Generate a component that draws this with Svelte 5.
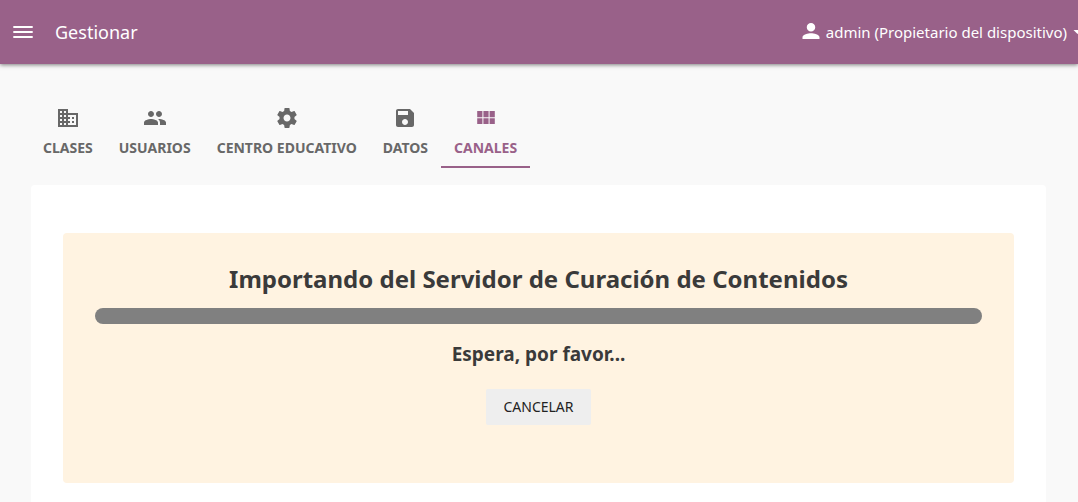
<script>
  const tabs = [
    { label: 'Clases', path: 'M12 7V3H2v18h20V7H12zM6 19H4v-2h2v2zm0-4H4v-2h2v2zm0-4H4V9h2v2zm0-4H4V5h2v2zm4 12H8v-2h2v2zm0-4H8v-2h2v2zm0-4H8V9h2v2zm0-4H8V5h2v2zm10 12h-8v-2h2v-2h-2v-2h2v-2h-2V9h8v10zm-2-8h-2v2h2v-2zm0 4h-2v2h2v-2z' },
    { label: 'Usuarios', path: 'M16 11c1.66 0 2.99-1.34 2.99-3S17.66 5 16 5s-3 1.34-3 3 1.34 3 3 3zm-8 0c1.66 0 2.99-1.34 2.99-3S9.66 5 8 5 5 6.34 5 8s1.34 3 3 3zm0 2c-2.33 0-7 1.17-7 3.5V19h14v-2.5C15 14.17 10.33 13 8 13zm8 0c-.29 0-.62.02-.97.05C16.19 13.89 17 15.02 17 16.5V19h6v-2.5c0-2.33-4.67-3.5-7-3.5z' },
    { label: 'Centro educativo', path: 'M19.43 12.98c.04-.32.07-.64.07-.98s-.03-.66-.07-.98l2.11-1.65c.19-.15.24-.42.12-.64l-2-3.46c-.12-.22-.39-.3-.61-.22l-2.49 1c-.52-.4-1.08-.73-1.69-.98l-.38-2.65C14.46 2.18 14.25 2 14 2h-4c-.25 0-.46.18-.49.42l-.38 2.65c-.61.25-1.17.59-1.69.98l-2.49-1c-.23-.09-.49 0-.61.22l-2 3.46c-.13.22-.07.49.12.64l2.11 1.65c-.04.32-.07.65-.07.98s.03.66.07.98l-2.11 1.65c-.19.15-.24.42-.12.64l2 3.46c.12.22.39.3.61.22l2.49-1c.52.4 1.08.73 1.69.98l.38 2.65c.03.24.24.42.49.42h4c.25 0 .46-.18.49-.42l.38-2.65c.61-.25 1.17-.59 1.69-.98l2.49 1c.23.09.49 0 .61-.22l2-3.46c.12-.22.07-.49-.12-.64l-2.11-1.65zM12 15.5c-1.93 0-3.5-1.57-3.5-3.5s1.57-3.5 3.5-3.5 3.5 1.57 3.5 3.5-1.57 3.5-3.5 3.5z' },
    { label: 'Datos', path: 'M17 3H5c-1.11 0-2 .9-2 2v14c0 1.1.89 2 2 2h14c1.1 0 2-.9 2-2V7l-4-4zm-5 16c-1.66 0-3-1.34-3-3s1.34-3 3-3 3 1.34 3 3-1.34 3-3 3zm3-10H5V5h10v4z' },
    { label: 'Canales', active: true, path: 'M3.2 11.3h5.2V5H3.2v6.3zm0 6.7h5.2v-5.7H3.2V18zm6.2 0h5.2v-5.7H9.4V18zm6.2 0h5.2v-5.7h-5.2V18zm-6.2-6.7h5.2V5H9.4v6.3zM15.6 5v6.3h5.2V5h-5.2z' },
  ];
</script>

<header>
  <button class="menu" aria-label="Menú">
    <svg viewBox="0 0 24 24"><path d="M2.3 18h19.4v-2H2.3v2zm0-5h19.4v-2H2.3v2zm0-7v2h19.4V6H2.3z" /></svg>
  </button>
  <h1>Gestionar</h1>
  <button class="user">
    <svg viewBox="0 0 24 24"><path d="M12 11.5c2.35 0 4.25-1.9 4.25-4.25S14.35 3 12 3 7.750 4.900 7.750 7.250 9.650 11.500 12 11.500zM12 13.300c-2.800 0-8.500 1.400-8.500 3.900V19h17v-1.800c0-2.500-5.700-3.900-8.500-3.900z" /></svg>
    <span>admin (Propietario del dispositivo)</span>
    <svg class="arrow" viewBox="0 0 10 5"><path d="M0 0l5 5 5-5z" /></svg>
  </button>
</header>

<nav>
  {#each tabs as tab}
    <a href="#top" class:active={tab.active} aria-current={tab.active ? 'page' : undefined}>
      <svg viewBox="0 0 24 24"><path d={tab.path} /></svg>
      <span>{tab.label}</span>
    </a>
  {/each}
</nav>

<main>
  <section>
    <h2>Importando del Servidor de Curación de Contenidos</h2>
    <div class="progress" role="progressbar" aria-label="Importando"></div>
    <h3>Espera, por favor...</h3>
    <button class="cancel">Cancelar</button>
  </section>
</main>

<style>
  :global(body) {
    margin: 0;
    background: #f9f9f9;
    color: #3a3a3a;
    font-family: "Noto Sans", sans-serif;
  }
  svg { display: block; flex: none; fill: currentColor; }
  button { border: 0; font-family: inherit; cursor: pointer; }
  header {
    display: flex;
    align-items: center;
    height: 64px;
    color: #fff;
    background: #996189;
    box-shadow: 0 1px 4px rgba(0, 0, 0, 0.5);
    overflow: hidden;
  }
  .menu { padding: 0 11px; background: none; color: inherit; }
  .menu svg { width: 24px; height: 24px; }
  h1 { margin: 0 0 0 9px; font-size: 18px; line-height: 24px; font-weight: 400; }
  .user {
    display: flex;
    align-items: center;
    margin: 0 -4px 0 auto;
    padding: 0;
    color: inherit;
    background: none;
    font-size: 15px;
    line-height: 24px;
    white-space: nowrap;
  }
  .user svg { width: 24px; height: 24px; margin-right: 3px; }
  .user .arrow { width: 9px; height: 4px; margin: 0 0 0 6px; }
  nav { display: flex; margin: 40px 30px 0; }
  nav a {
    display: flex;
    flex-direction: column;
    align-items: center;
    padding: 2px 13px 8px;
    border-bottom: 2px solid transparent;
    color: #686868;
    font-size: 14px;
    line-height: 20px;
    font-weight: 700;
    text-transform: uppercase;
    text-decoration: none;
  }
  nav svg { width: 24px; height: 24px; margin-bottom: 8px; }
  nav .active { color: #996189; border-color: #996189; }
  main { margin: 17px 32px 0 31px; padding: 48px 32px 19px; border-radius: 4px 4px 0 0; background: #fff; }
  section {
    display: flex;
    flex-direction: column;
    align-items: center;
    padding: 28px 32px 58px;
    border-radius: 4px;
    background: #fff3e1;
    text-align: center;
  }
  h2 { margin: 0; font-size: 24px; line-height: 36px; font-weight: 700; }
  .progress { width: 100%; height: 16px; margin: 11px 0 16px; border-radius: 8px; background: #808080; }
  h3 { margin: 0; font-size: 19px; line-height: 28px; font-weight: 700; }
  .cancel {
    margin-top: 21px;
    padding: 0 17px;
    border-radius: 2px;
    background: #eee;
    color: #222;
    font-size: 14px;
    line-height: 36px;
    text-transform: uppercase;
  }
</style>
